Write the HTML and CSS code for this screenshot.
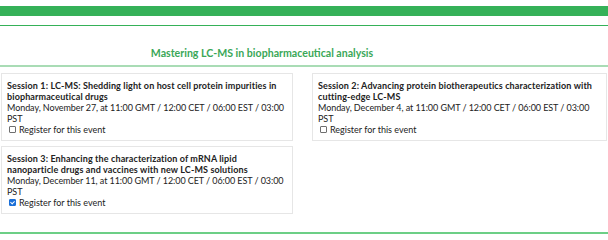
FILE: index.html
```html
<!DOCTYPE html>
<html>
<head>
<meta charset="utf-8">
<link rel="stylesheet" href="styles.css">
</head>
<body>
<div class="page">
  <div class="topbar"></div>
  <div class="thinline"></div>
  <h2 class="title">Mastering LC-MS in biopharmaceutical analysis</h2>
  <div class="titleline"></div>
  <div class="grid">
    <div class="card">
      <div class="stitle">Session 1: LC-MS: Shedding light on host cell protein impurities in biopharmaceutical drugs</div>
      <div class="sdate">Monday, November 27, at 11:00 GMT / 12:00 CET / 06:00 EST / 03:00 PST</div>
      <label class="reg"><input type="checkbox" class="cb"> Register for this event</label>
    </div>
    <div class="card">
      <div class="stitle">Session 2: Advancing protein biotherapeutics characterization with cutting-edge LC-MS</div>
      <div class="sdate">Monday, December 4, at 11:00 GMT / 12:00 CET / 06:00 EST / 03:00 PST</div>
      <label class="reg"><input type="checkbox" class="cb"> Register for this event</label>
    </div>
    <div class="card">
      <div class="stitle">Session 3: Enhancing the characterization of mRNA lipid nanoparticle drugs and vaccines with new LC-MS solutions</div>
      <div class="sdate">Monday, December 11, at 11:00 GMT / 12:00 CET / 06:00 EST / 03:00 PST</div>
      <label class="reg"><input type="checkbox" class="cb" checked> Register for this event</label>
    </div>
  </div>
  <div class="bottomline"></div>
</div>
</body>
</html>
```
FILE: styles.css
```css
html, body {
  margin: 0;
  padding: 0;
  background: #fff;
}
.page {
  font-family: Lato, "Liberation Sans", sans-serif;
  color: #222;
  padding-top: 6px;
}
.topbar {
  height: 10px;
  background: #35b158;
}
.thinline {
  height: 1px;
  background: #35b158;
  margin-top: 9px;
}
.title {
  margin: 0;
  padding: 21px 84px 0 0;
  height: 18px;
  text-align: center;
  font-size: 10.6px;
  font-weight: 700;
  color: #3aa757;
}
.titleline {
  height: 2px;
  background: #a9dcb5;
}
.grid {
  display: grid;
  grid-template-columns: 292px 295px;
  column-gap: 19px;
  row-gap: 5px;
  padding: 6px 1px 0 1px;
  align-items: start;
}
.card {
  border: 1px solid #e6e6e6;
  padding: 6px 3px 5px 5px;
  font-size: 9px;
  line-height: 11px;
}
.stitle {
  font-weight: 700;
  letter-spacing: 0.12px;
}
.sdate {
  letter-spacing: -0.07px;
}
.reg {
  display: flex;
  align-items: center;
  gap: 3px;
  margin-left: 1px;
}
.cb {
  appearance: none;
  -webkit-appearance: none;
  box-sizing: border-box;
  width: 7px;
  height: 7px;
  margin: 0 0 0 1px;
  border: 1px solid #6f6f6f;
  border-radius: 1px;
  background: #fff;
  position: relative;
}
.cb:checked {
  background: #1a6fd8;
  border-color: #1a6fd8;
}
.cb:checked::after {
  content: "";
  position: absolute;
  left: 1px;
  top: 0;
  width: 2px;
  height: 3px;
  border: solid #fff;
  border-width: 0 1px 1px 0;
  transform: rotate(45deg);
}
.bottomline {
  height: 2px;
  background: #6ccf86;
  margin-top: 18px;
}
```
